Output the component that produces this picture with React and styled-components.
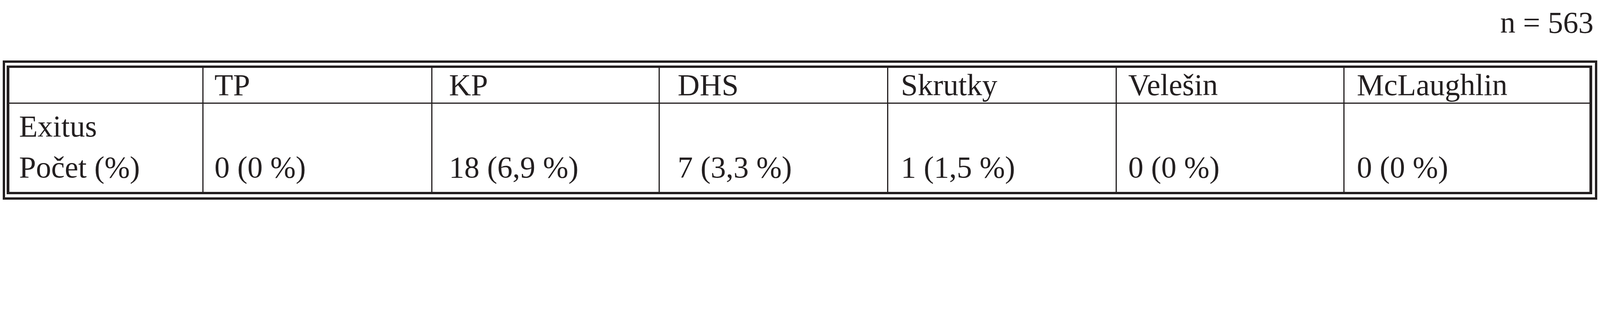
import React from 'react'
import styled, { createGlobalStyle } from 'styled-components'

// the layout is measured on a 6197px wide page; scale it to the real viewport
const u = (n) => `calc(${n} * 100vw / 6197)`

const GlobalStyle = createGlobalStyle`
    html, body {
        margin: 0;
        padding: 0;
        background: #ffffff;
        overflow: hidden;
    }
    body {
        font-family: "Liberation Serif", "Times New Roman", serif;
        color: #231f20;
    }
`

const Page = styled.div`
    width: 100vw;
    padding: 0 ${u(11)};
    box-sizing: border-box;
`

const Caption = styled.div`
    margin-top: ${u(28)};
    margin-bottom: ${u(88)};
    padding-right: ${u(14)};
    height: ${u(118)};
    text-align: right;
    font-size: ${u(118)};
    line-height: ${u(118)};
    white-space: nowrap;
`

const OuterFrame = styled.div`
    border: ${u(10)} solid #231f20;
    padding: ${u(11)} ${u(10)} ${u(11)} ${u(5)};
`

const InnerFrame = styled.div`
    border-style: solid;
    border-color: #231f20;
    border-width: ${u(10)} ${u(11)};
    display: grid;
    grid-template-columns: ${({ $cols }) => $cols};
`

const HeadCell = styled.div`
    box-sizing: border-box;
    height: ${u(140)};
    padding: ${u(8)} 0 0 ${({ $pad }) => u($pad)};
    border-bottom: ${u(5)} solid #231f20;
    border-left: ${({ $first }) => ($first ? '0' : `${u(5)} solid #231f20`)};
    font-size: ${u(118)};
    line-height: ${u(118)};
    white-space: nowrap;
    overflow: hidden;
`

const BodyCell = styled.div`
    box-sizing: border-box;
    height: ${u(342)};
    padding: ${u(8)} 0 0 ${({ $pad }) => u($pad)};
    border-left: ${({ $first }) => ($first ? '0' : `${u(5)} solid #231f20`)};
    font-size: ${u(118)};
    white-space: nowrap;
    overflow: hidden;
`

const Line = styled.div`
    height: ${u(160)};
    line-height: ${u(160)};
`

const columns = [
    { title: '', width: 747, pad: 38 },
    { title: 'TP', width: 886, pad: 43, value: '0 (0 %)' },
    { title: 'KP', width: 880, pad: 65, value: '18 (6,9 %)' },
    { title: 'DHS', width: 885, pad: 70, value: '7 (3,3 %)' },
    { title: 'Skrutky', width: 885, pad: 49, value: '1 (1,5 %)' },
    { title: 'Velešin', width: 881, pad: 44, value: '0 (0 %)' },
    { title: 'McLaughlin', width: 953, pad: 48, value: '0 (0 %)' },
]

export default function App() {
    const cols = columns.map((c) => '1fr'.replace('1', c.width)).join(' ')

    return (
        <>
            <GlobalStyle />
            <Page>
                <Caption>n = 563</Caption>
                <OuterFrame>
                    <InnerFrame $cols={cols}>
                        {columns.map((c, i) => (
                            <HeadCell key={'h' + i} $pad={c.pad} $first={i === 0}>
                                {c.title}
                            </HeadCell>
                        ))}
                        {columns.map((c, i) => (
                            <BodyCell key={'b' + i} $pad={c.pad} $first={i === 0}>
                                {i === 0 ? (
                                    <>
                                        <Line>Exitus</Line>
                                        <Line>Počet (%)</Line>
                                    </>
                                ) : (
                                    <>
                                        <Line>&nbsp;</Line>
                                        <Line>{c.value}</Line>
                                    </>
                                )}
                            </BodyCell>
                        ))}
                    </InnerFrame>
                </OuterFrame>
            </Page>
        </>
    )
}
